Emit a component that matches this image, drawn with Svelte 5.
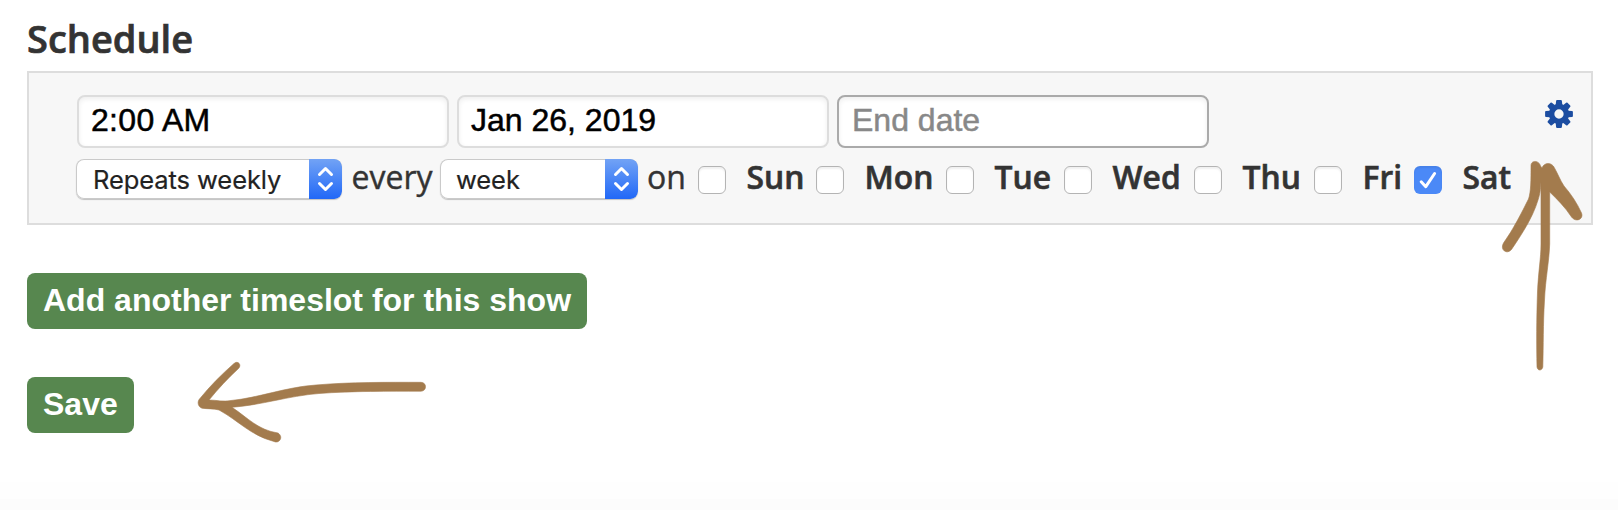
<script>
  const days = [
    { name: 'Sun', span: 118 },
    { name: 'Mon', span: 130 },
    { name: 'Tue', span: 118 },
    { name: 'Wed', span: 130 },
    { name: 'Thu', span: 120 },
    { name: 'Fri', span: 100 },
    { name: 'Sat', span: 100, checked: true }
  ];
  const teeth = [0, 45, 90, 135, 180, 225, 270, 315];
</script>

{#snippet stepper()}
  <span class="stepper">
    <svg width="33" height="40" viewBox="0 0 33 40">
      <path d="M10.500 15.500 16.500 9.500l6 6M10.500 24.500l6 6 6-6" />
    </svg>
  </span>
{/snippet}

<main>
  <h2>Schedule</h2>

  <section class="slot">
    <div class="fields">
      <div class="inputs">
        <div class="input time">2:00 AM</div>
        <div class="input">Jan 26, 2019</div>
        <div class="input empty">End date</div>
      </div>
      <div class="repeat">
        <div class="select long"><span>Repeats weekly</span>{@render stepper()}</div>
        <span class="word every">every</span>
        <div class="select short"><span>week</span>{@render stepper()}</div>
        <span class="word on">on</span>
        {#each days as day}
          <div class="day" style="width: {day.span}px">
            <span class="box" class:checked={day.checked}>
              {#if day.checked}
                <svg width="28" height="28" viewBox="0 0 28 28"><path d="M7.200 15.800 11.800 20.700 20.600 7.500" /></svg>
              {/if}
            </span>
            <b>{day.name}</b>
          </div>
        {/each}
      </div>
    </div>
    <svg class="gear" width="28" height="28" viewBox="-14 -14 28 28">
      <circle r="7.400" />
      {#each teeth as angle}
        <path d="M-3.300-9 L-2.900-13 Q-2.800-13.900-1.900-13.900 H1.900 Q2.800-13.900 2.900-13 L3.300-9Z" transform="rotate({angle})" />
      {/each}
    </svg>
  </section>

  <button class="add">Add another timeslot for this show</button>
  <button class="save">Save</button>

  <svg class="arrows" width="1618" height="510" viewBox="0 0 1618 510">
    <path d="M1531 165.500C1531 160 1539 160 1540.500 166L1542 168C1544 162 1552 162 1554.500 168C1558 174 1560 180 1564 186C1571 194 1577 203 1581.500 213C1584 219 1576 223 1571.500 217C1565 207 1557 199 1549.700 192V244C1549 263 1545.500 278 1544.500 300C1543 325 1543.500 345 1542.800 367C1542 371 1537.500 371 1537 367C1536.500 345 1536.500 320 1537.500 292C1538.500 270 1541 258 1541 244V182C1540.500 190 1540 194 1538 200C1533 217 1522 234 1511.500 249.500C1507 255 1499.500 250 1503.500 243C1513 230 1522 212 1528.500 199C1531 192 1531 180 1531 165.500Z" />
    <path d="M234 363.500C238 360 242 365 238.500 368.500C228 378 218 389 209 400C216 400 223 402 231 400.500C258 398 286 387 316 385C350 382 388 382.300 421 382.300C427 382.300 427 391.200 421 391.200C389 391.200 352 391 319 393.500C288 396 262 405 232 407.300C248 418 258 430 278 433C284 437 279 444 274 441.500C250 435 239 421 219 410C214 408.500 207 409 202 408.200C198 407 197 402 199.500 399C210 386 222 374 234 363.500Z" />
  </svg>
  <footer></footer>
</main>

<style>
  :global(body) { margin: 0; background: #fff; }
  main {
    position: relative;
    box-sizing: border-box;
    width: 1618px;
    height: 510px;
    padding: 0 25px 0 27px;
    overflow: hidden;
    display: flex;
    flex-direction: column;
    align-items: flex-start;
    color: #333;
    font-family: "Open Sans", sans-serif;
  }
  h2 {
    margin: 0;
    height: 71px;
    font-size: 38px;
    line-height: 76px;
    font-weight: 600;
    -webkit-text-stroke: 0.700px currentColor;
  }
  .slot {
    box-sizing: border-box;
    width: 1566px;
    height: 154px;
    border: 2px solid #ddd;
    background: #f7f7f7;
    display: flex;
    justify-content: space-between;
    padding: 22px 18px 0 47px;
  }
  .inputs { display: flex; gap: 8px; padding-left: 1px; }
  .input {
    box-sizing: border-box;
    width: 372px;
    height: 53px;
    border: 2px solid #ddd;
    border-radius: 8px;
    background: #fff;
    box-shadow: inset 0 2px 5px rgba(0, 0, 0, 0.07);
    padding-left: 12px;
    color: #000;
    font: 32px/47px "Liberation Sans", Arial, sans-serif;
    -webkit-text-stroke: 0.500px currentColor;
    white-space: nowrap;
  }
  .input.time { letter-spacing: 0.300px; }
  .input.empty { border-color: #aaa; color: #888; padding-left: 13px; }
  .repeat { display: flex; margin-top: 11px; height: 40px; white-space: nowrap; }
  .select {
    box-sizing: border-box;
    height: 40px;
    display: flex;
    justify-content: space-between;
    border-radius: 8px;
    background: #fff;
    box-shadow: inset 0 0 0 1px #cacaca, 0 1px 1px rgba(0, 0, 0, 0.22);
    color: #222;
    font: 25.500px/42px Inter, sans-serif;
    letter-spacing: -0.080px;
    -webkit-text-stroke: 0.200px currentColor;
    padding-left: 17px;
    overflow: hidden;
  }
  .long { width: 266px; }
  .short { width: 198px; padding-left: 16px; }
  .stepper {
    width: 33px;
    height: 40px;
    background: linear-gradient(#72a3f5, #2168f7);
    border-radius: 0 7px 7px 0;
  }
  .stepper svg { display: block; }
  .stepper path, .box path { fill: none; stroke: #fff; stroke-width: 3; stroke-linecap: round; stroke-linejoin: round; }
  .word { box-sizing: border-box; font-size: 32px; line-height: 36px; -webkit-text-stroke: 0.400px currentColor; }
  .every { width: 98px; padding-left: 9.500px; }
  .on { width: 60px; padding-left: 9px; }
  .day { display: flex; gap: 20.500px; flex: none; }
  .box {
    box-sizing: border-box;
    width: 28px;
    height: 28px;
    margin-top: 7px;
    border: 1px solid #b4b4b4;
    border-radius: 6px;
    background: #fff;
    box-shadow: inset 0 2px 2px rgba(0, 0, 0, 0.06);
    flex: none;
  }
  .box.checked { border: 0; background: #4b89f7; }
  .box svg { display: block; }
  b { font-size: 31.800px; line-height: 35px; font-weight: 600; -webkit-text-stroke: 0.600px currentColor; }
  .gear { margin-top: 5px; fill: #1c4da1; }
  .gear circle { fill: none; stroke: #1c4da1; stroke-width: 5.500; }
  button {
    border: 0;
    border-radius: 8px;
    height: 56px;
    padding: 0 0 2px 16px;
    background: #57874f;
    color: #fff;
    font: bold 32px/54px "Liberation Sans", Arial, sans-serif;
    text-align: left;
    white-space: nowrap;
  }
  .add { width: 560px; margin-top: 48px; }
  .save { width: 107px; margin-top: 48px; }
  .arrows {
    position: absolute;
    left: 0;
    top: 0;
    fill: #a37b4d;
    stroke: #a37b4d;
    stroke-width: 0.600px;
    pointer-events: none;
  }
  footer { width: 1618px; height: 28px; margin: 49px 0 0 -27px; background: linear-gradient(#fefefe 60%, #fcfcfc 60%); }
</style>
